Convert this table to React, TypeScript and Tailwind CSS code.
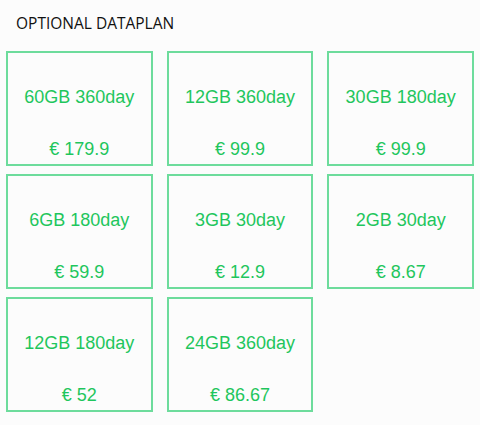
import React from "react";

const plans = [
  { name: "60GB 360day", price: "€ 179.9" },
  { name: "12GB 360day", price: "€ 99.9" },
  { name: "30GB 180day", price: "€ 99.9" },
  { name: "6GB 180day", price: "€ 59.9" },
  { name: "3GB 30day", price: "€ 12.9" },
  { name: "2GB 30day", price: "€ 8.67" },
  { name: "12GB 180day", price: "€ 52" },
  { name: "24GB 360day", price: "€ 86.67" },
];

export default function App() {
  return (
    <div className="w-[480px] h-[425px] bg-[#fcfcfc] overflow-hidden">
      <div
        className="h-[44px] pl-[16px] pt-[12px] text-[15.5px] leading-[22px] text-[#111]"
        style={{ fontFamily: '"Open Sans", sans-serif' }}
      >
        OPTIONAL DATAPLAN
      </div>
      <div className="px-[6px] pt-[7px] grid grid-cols-3 gap-x-[14px] gap-y-[8px]">
        {plans.map((p, i) => (
          <div
            key={i}
            className="h-[115px] border-2 border-[#6ddc9c] flex flex-col items-center justify-between pt-[33px] pb-[4px] text-[#1fc65d] text-[18px] leading-[22px]"
            style={{ fontFamily: '"Liberation Sans", Arial, sans-serif' }}
          >
            <div>{p.name}</div>
            <div>{p.price}</div>
          </div>
        ))}
      </div>
    </div>
  );
}
